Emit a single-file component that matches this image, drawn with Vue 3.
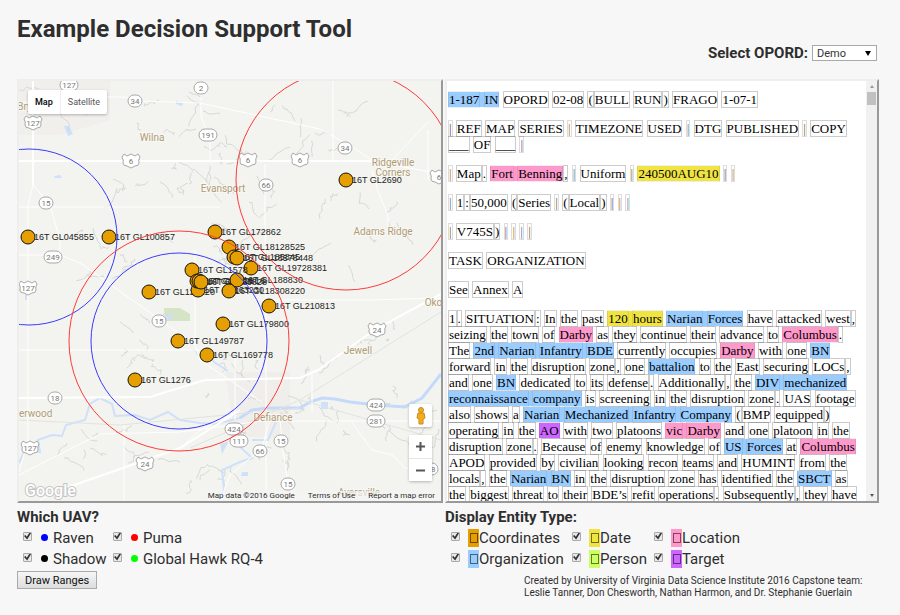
<script setup>
import { ref } from 'vue'

const opord = ref('Demo')

const uavs = ref([
  { name: 'Raven', color: '#0000ff', on: true },
  { name: 'Puma', color: '#ff0000', on: true },
  { name: 'Shadow', color: '#000000', on: true },
  { name: 'Global Hawk RQ-4', color: '#00ff00', on: true },
])

const entities = ref([
  { name: 'Coordinates', color: '#e69f00', on: true },
  { name: 'Date', color: '#f0e442', on: true },
  { name: 'Location', color: '#ff99cc', on: true },
  { name: 'Organization', color: '#99ccff', on: true },
  { name: 'Person', color: '#ccff66', on: true },
  { name: 'Target', color: '#cc66ff', on: true },
])

/* Entities are written as {X:words}, where X is the first letter of the type. */
const source = [
  '{O:1-187 IN} OPORD 02-08 (BULL RUN) FRAGO 1-07-1',
  '| REF MAP SERIES | TIMEZONE USED | DTG PUBLISHED | COPY ___ OF ___ |',
  '| Map. {L:Fort Benning}, | Uniform | {D:240500AUG10} | |',
  '| 1:50,000 (Series | (Local) | | |',
  '| V745S) | | | |',
  'TASK ORGANIZATION',
  'See Annex A',
  '1. SITUATION: In the past {D:120 hours} {O:Narian Forces} have attacked west, seizing the town of {L:Darby} as they continue their advance to {L:Columbus}. The {O:2nd Narian Infantry BDE} currently occupies {L:Darby} with one {O:BN} forward in the disruption zone, one {O:battalion} to the East securing LOCs, and one {O:BN} dedicated to its defense. Additionally, the {O:DIV mechanized reconnaissance company} is screening in the disruption zone. UAS footage also shows a {O:Narian Mechanized Infantry Company} (BMP equipped) operating in the {T:AO} with two platoons {L:vic Darby} and one platoon in the disruption zone. Because of enemy knowledge of {O:US Forces} at {L:Columbus} APOD provided by civilian looking recon teams and HUMINT from the locals, the {O:Narian BN} in the disruption zone has identified the {O:SBCT} as the biggest threat to their BDE’s refit operations. Subsequently, they have shown the intent to defend in depth along the river and to delay forces',
]

const tints = ['tint-a', 'tint-b', 'tint-c', 'tint-d']
let pipes = 0
function tokens(text) {
  return text.match(/\s+|[|().:]|,(?!\d)|[^\s|().:,]+(?:,\d+)*/g).map((t) => ({
    text: t,
    cls: /^\s/.test(t) ? 'space' : t === '|' ? ['token', 'pipe', tints[pipes++ % 4]] : 'token',
  }))
}
const paragraphs = source.map((p) =>
  p.split(/(\{[A-Z]:[^}]*\})/).filter(Boolean).map((part) => {
    const m = part.match(/^\{([A-Z]):(.*)\}$/)
    return m ? { cls: ['entity', 'ent-' + m[1].toLowerCase()], tokens: tokens(m[2]) } : { cls: 'plain', tokens: tokens(part) }
  }),
)

const markers = [
  [28, 237, '045855'], [109, 237, '100857'], [215, 232, '172862'], [229, 247, '18128525'],
  [234, 257, '185845'], [237, 258, '18578448'], [251, 268, '19728381'], [192, 270, '1578'],
  [149, 292, '125120'], [198, 290, '163230'], [197, 281, '1628'], [199, 281, '162818'], [201, 282, '163828'],
  [237, 280, '188830'], [229, 291, '18308220'], [269, 306, '210813'], [223, 324, '179800'],
  [178, 341, '149787'], [207, 355, '169778'], [135, 380, '1276'], [346, 180, '2690'],
]
const rings = [
  [29, 237, 88, '#3a3aff'], [179, 341, 88, '#3a3aff'], [179, 341, 110, '#ff3a3a'], [346, 180, 110, '#ff3a3a'],
]
const stateRoutes = [
  [69, 85, '127'], [201, 88, '2'], [135, 101, '34'], [208, 135, '191'], [345, 148, '34'], [266, 185, '66'],
  [46, 203, '15'], [53, 257, '249'], [159, 321, '15'], [55, 398, '18'], [234, 429, '424'], [239, 441, '111'],
  [260, 451, '66'], [281, 441, '15'], [288, 484, '15'], [376, 405, '424'], [376, 421, '281'], [431, 469, '18'],
]
const usRoutes = [
  [33, 123, '127'], [131, 161, '6'], [248, 160, '6'], [300, 160, '6'], [439, 177, '6'], [28, 288, '127'],
  [377, 330, '24'], [30, 448, '127'], [145, 464, '24'],
]
const towns = [
  [152, 141, 'Wilna'], [223, 192, 'Evansport'], [393, 166, 'Ridgeville'], [393, 176, 'Corners'],
  [383, 235, 'Adams Ridge'], [358, 354, 'Jewell'], [443, 306, 'Okolona'], [273, 421, 'Defiance'],
  [359, 496, 'Ayersville'], [30, 110, 'Bryan'], [30, 417, 'Sherwood'],
]
const roads = [
  'M19 161H372L441 174', 'M33 81V185L28 205V440L19 472', 'M33 185L50 205L60 240L60 255L80 263L152 314L195 345L200 360L262 402',
  'M19 103L60 97L125 97L140 101L200 103L320 129L352 147L372 160', 'M201 81V116L210 140V161', 'M333 81V160',
  'M265 161V215L266 300V500', 'M19 207H220', 'M19 255H60', 'M195 250V345', 'M19 350H200',
  'M19 398L150 397L205 380L300 378L318 370L376 329L441 294', 'M312 372V411', 'M441 421H262L180 432L100 434L19 475',
  'M240 410L200 430L180 448L60 490L40 500', 'M280 420L283 450L288 484L297 501', 'M270 420L262 448L230 475L220 501',
  'M351 421L372 450L392 455L405 468H441', 'M388 235V215L378 192L372 170', 'M428 130V180', 'M429 121L392 160',
  'M124 425V500', 'M235 355V420', 'M262 300H370L441 298',
]
const rivers = [
  'M19 463L25 450L40 452L38 440L52 435L62 436L66 425L85 420L90 404L100 398L112 404L115 416L135 415L150 420L168 412L180 420L200 423L215 424L232 420L240 418',
  'M19 290L26 288V300', 'M240 426L237 444L252 458L240 462L222 470L224 490L218 501', 'M276 422L268 440L252 440',
  'M205 349L214 362L228 371',
]

/* Small branching creeks, laid out from a fixed seed. */
let seed = 7
const rnd = () => (seed = (seed * 16807) % 2147483647) / 2147483647
const areas = [
  [140, 90, 70, 45], [165, 130, 55, 55], [215, 145, 60, 80], [260, 100, 90, 60], [30, 85, 70, 45], [60, 230, 110, 60],
  [80, 320, 80, 60], [200, 225, 60, 60], [200, 345, 60, 55], [270, 390, 90, 50], [380, 395, 60, 40], [40, 410, 110, 50],
  [180, 455, 60, 40], [230, 425, 80, 50], [310, 190, 90, 90], [300, 320, 110, 60], [100, 145, 90, 50],
]
const creeks = areas.flatMap(([x, y, w, h]) =>
  Array.from({ length: 9 }, () => {
    let d = `M${Math.round(x + rnd() * w)} ${Math.round(y + rnd() * h)}`
    const dx = rnd() * 6 - 3
    const dy = rnd() * 6 - 3
    for (let i = 0; i < 6; i++) d += `l${(dx + rnd() * 6 - 3).toFixed(1)} ${(dy + rnd() * 6 - 3).toFixed(1)}`
    return d
  }),
)
</script>

<template>
  <div class="page">
    <h1>Example Decision Support Tool</h1>
    <div class="chooser">
      <label for="opord">Select OPORD:</label>
      <span class="select-box">
        <select id="opord" v-model="opord"><option>Demo</option></select>
        <span class="arrow" aria-hidden="true"></span>
      </span>
    </div>

    <main class="columns">
      <section class="panel map">
        <svg class="canvas" viewBox="19 81 422 420" preserveAspectRatio="xMidYMid slice" role="img" aria-label="Map">
          <rect x="0" y="0" width="500" height="600" fill="#f3f4ef" />
          <path d="M19 81H110V120L60 135H19Z" fill="#f1efec" />
          <path d="M225 372H290V440L235 435Z" fill="#f0eeea" />
          <path d="M164 308H180L190 314V321H165Z" fill="#d5e3c6" />
          <path d="M164 318L170 313L174 316L167 321Z M64 126H69L73 134L68 136Z M55 176L60 175L62 178H54Z M220 444L229 441L222 454Z M321 402H328V409H321Z M242 472H248V476H241Z M176 101L183 103L182 106L176 104Z" fill="#cfe0fa" />
          <path v-for="d in creeks" :key="d" :d="d" class="creek" />
          <path v-for="d in rivers" :key="d" :d="d" class="river" />
          <path d="M240 418L252 410L268 408L300 408L310 402L322 398L335 399L350 402L376 405L405 407L422 398L430 388L441 374" class="river wide" />
          <path d="M19 420L120 425L300 408M190 448L300 400L441 312M300 400L441 440" class="rail" />
          <path v-for="d in roads" :key="d" :d="d" class="road" />
          <path d="M19 398L150 397L205 380L300 378L318 370L376 329L441 294M240 410L180 448L60 490M33 81V185M19 161H372" class="road main" />
          <g v-for="[x, y, n] in stateRoutes" :key="'s' + x + y" class="route">
            <rect :x="x - (n.length > 2 ? 9 : 7)" :y="y - 6" :width="n.length > 2 ? 18 : 14" height="12" rx="6" />
            <text :x="x" :y="y + 3">{{ n }}</text>
          </g>
          <g v-for="[x, y, n] in usRoutes" :key="'u' + x + y" class="route">
            <path :transform="`translate(${x} ${y})`" d="M-7 -7L-4 -5L0 -7L4 -5L7 -7L9 -4Q7 -1 8 2Q8 5 4 5L0 7L-4 5Q-8 5 -8 2Q-7 -1 -9 -4Z" />
            <text :x="x" :y="y + 3">{{ n }}</text>
          </g>
          <text v-for="[x, y, n] in towns" :key="n" :x="x" :y="y" class="town">{{ n }}</text>
          <g v-for="[x, y, n] in markers" :key="n">
            <circle :cx="x" :cy="y" r="7" class="dot-marker" />
            <text :x="x + 6" :y="y + 3" class="coord">16T GL{{ n }}</text>
          </g>
          <circle v-for="[x, y, r, c] in rings" :key="c + x" :cx="x" :cy="y" :r="r" :stroke="c" class="ring" />
          <text x="25" y="496" class="brand">Google</text>
        </svg>
        <div class="map-type">
          <button type="button" class="active">Map</button>
          <button type="button">Satellite</button>
        </div>
        <div class="map-controls">
          <button type="button" class="pegman" aria-label="Street View">
            <svg width="10" height="18" viewBox="0 0 10 18">
              <path d="M2 6H8L9 11L7 12V17H3V12L1 11Z" fill="#f4ac21" stroke="#c98a13" />
              <circle cx="5" cy="3" r="2.5" fill="#f4ac21" stroke="#c98a13" />
            </svg>
          </button>
          <div class="zoom">
            <button type="button" aria-label="Zoom in"><svg width="9" height="9"><path d="M4.5 0V9M0 4.5H9" stroke="#555" stroke-width="2" /></svg></button>
            <button type="button" aria-label="Zoom out"><svg width="9" height="9"><path d="M0 4.5H9" stroke="#555" stroke-width="2" /></svg></button>
          </div>
        </div>
        <div class="legal">
          <span>Map data ©2016 Google</span><a href="#terms">Terms of Use</a><a href="#report">Report a map error</a>
        </div>
      </section>

      <section class="panel reader">
        <article class="order">
          <p v-for="(p, i) in paragraphs" :key="i"><span v-for="(part, j) in p" :key="j" :class="part.cls"><span v-for="(t, k) in part.tokens" :key="k" :class="t.cls">{{ t.text }}</span></span></p>
        </article>
        <div class="scrollbar" aria-hidden="true">
          <span class="tip up"></span><span class="thumb"></span><span class="tip down"></span>
        </div>
      </section>

      <form class="options" @submit.prevent>
        <h2>Which UAV?</h2>
        <div class="uav-grid">
          <label v-for="u in uavs" :key="u.name">
            <input v-model="u.on" type="checkbox" />
            <span class="bullet" :style="{ background: u.color }"></span>{{ u.name }}
          </label>
        </div>
        <button type="submit" class="draw">Draw Ranges</button>
      </form>

      <form class="options" @submit.prevent>
        <h2>Display Entity Type:</h2>
        <div class="entity-grid">
          <label v-for="e in entities" :key="e.name">
            <input v-model="e.on" type="checkbox" />
            <span class="swatch" :style="{ background: e.color }"><i></i></span>{{ e.name }}
          </label>
        </div>
        <p class="credits">Created by University of Virginia Data Science Institute 2016 Capstone team:<br />Leslie Tanner, Don Chesworth, Nathan Harmon, and Dr. Stephanie Guerlain</p>
      </form>
    </main>
  </div>
</template>

<style>
body {
  background: #f7f7f7;
}
</style>

<style scoped>
.page {
  box-sizing: border-box;
  padding: 14px 21px 12px 17px;
  font-family: Roboto, sans-serif;
  color: #2e2e2e;
}
h1 {
  margin: 0;
  font-size: 24px;
  line-height: 30px;
}
.chooser {
  display: flex;
  justify-content: flex-end;
  align-items: center;
  gap: 4px;
  height: 18px;
  margin: 0 2px 17px 0;
  font-size: 15px;
  font-weight: bold;
}
.select-box {
  display: grid;
  align-items: center;
}
.select-box > * {
  grid-area: 1 / 1;
}
select {
  appearance: none;
  width: 65px;
  height: 16px;
  padding: 0 4px;
  border: 1px solid #a9a9a9;
  border-radius: 0;
  background: #fff;
  font: 11px Roboto, sans-serif;
  color: #333;
}
.arrow {
  justify-self: end;
  margin-right: 6px;
  border: 3px solid transparent;
  border-top: 5px solid #000;
  border-bottom: 0;
  pointer-events: none;
}
.columns {
  display: grid;
  grid-template-columns: 426fr 434fr;
  column-gap: 2px;
}
.panel {
  box-sizing: border-box;
  height: 424px;
  border: 2px solid;
  border-color: #eee #999 #999 #eee;
  overflow: hidden;
}
.map {
  position: relative;
}
.canvas {
  display: block;
  width: 100%;
  height: 100%;
}
.creek {
  fill: none;
  stroke: #d6d9d5;
  stroke-width: 1;
}
.river {
  fill: none;
  stroke: #cfe0f8;
  stroke-width: 2;
}
.wide {
  stroke: #c4dafa;
  stroke-width: 3;
}
.rail {
  fill: none;
  stroke: #e2e2de;
}
.road {
  fill: none;
  stroke: #fff;
  stroke-width: 1;
}
.main {
  stroke-width: 2;
}
.route rect,
.route path {
  fill: #fff;
  stroke: #a8a8a8;
}
.route text {
  font-size: 8px;
  text-anchor: middle;
  fill: #777;
}
.town {
  font-size: 10px;
  text-anchor: middle;
  fill: #b09c74;
  stroke: #f8f8f4;
  stroke-width: 2;
  paint-order: stroke;
}
.dot-marker {
  fill: #e69f00;
  stroke: #111;
}
.coord {
  font: 9px 'Liberation Sans', sans-serif;
  fill: #222;
}
.ring {
  fill: none;
  stroke-width: 1;
}
.brand {
  font-size: 16px;
  font-weight: 500;
  fill: #fff;
  stroke: #c4c4c4;
  stroke-width: 2;
  paint-order: stroke;
}
.map-type {
  position: absolute;
  top: 9px;
  left: 9px;
  display: flex;
  background: #fff;
  border-radius: 2px;
  box-shadow: 0 1px 3px #0004;
}
.map-type button {
  height: 24px;
  padding: 0 7px;
  border: 0;
  background: none;
  font: 9px Roboto, sans-serif;
  color: #565656;
}
.map-type .active {
  border-right: 1px solid #eee;
  font-weight: 500;
  color: #000;
}
.map-controls {
  position: absolute;
  right: 9px;
  bottom: 20px;
  display: grid;
  gap: 8px;
}
.map-controls button {
  display: grid;
  place-items: center;
  width: 23px;
  height: 23px;
  padding: 0;
  border: 0;
  background: #fff;
}
.pegman,
.zoom {
  border-radius: 2px;
  box-shadow: 0 1px 3px #0004;
}
.zoom {
  display: grid;
  background: #fff;
}
.zoom button + button {
  border-top: 1px solid #e6e6e6;
}
.legal {
  position: absolute;
  right: 0;
  bottom: 0;
  display: flex;
  gap: 13px;
  padding: 0 6px 0 4px;
  background: #f5f5f5b0;
  font-size: 8px;
  line-height: 10px;
}
.legal a {
  color: inherit;
  text-decoration: none;
}
.reader {
  display: flex;
  background: #fff;
}
.order {
  flex: 1;
  min-width: 0;
  padding: 11px 0 0 1px;
  overflow: auto;
  scrollbar-width: none;
  font: 13px/16px 'Liberation Serif', serif;
  color: #000;
}
.order p {
  margin: 0 0 13px;
}
.token {
  border: 1px solid #0003;
}
.entity .token {
  border-color: #0001;
}
.pipe {
  border-color: #0002;
}
.tint-a {
  color: #5c3c80;
}
.tint-b {
  color: #b06820;
}
.tint-c {
  color: #4470a0;
}
.tint-d {
  color: #706010;
}
.ent-o {
  background: #99ccff;
}
.ent-l {
  background: #ff99cc;
}
.ent-d {
  background: #f0e442;
}
.ent-t {
  background: #cc66ff;
}
.scrollbar {
  display: flex;
  flex-direction: column;
  align-items: center;
  width: 11px;
  background: #f1f1f1;
}
.tip {
  margin: 4px 0;
  border: 2px solid transparent;
}
.up {
  border-top: 0;
  border-bottom: 3px solid #999;
}
.down {
  margin-top: auto;
  border-bottom: 0;
  border-top: 3px solid #555;
}
.thumb {
  width: 9px;
  height: 13px;
  background: #c1c1c1;
}
.options h2 {
  margin: 4px 0 0;
  font-size: 15px;
  line-height: 20px;
}
.uav-grid {
  display: grid;
  grid-template-columns: 90px 1fr;
}
.entity-grid {
  display: grid;
  grid-template-columns: 121px 82px 1fr;
}
.options label {
  display: flex;
  align-items: center;
  height: 21px;
  padding-left: 6px;
  font-size: 15px;
  white-space: nowrap;
}
.options input {
  appearance: none;
  display: grid;
  place-items: center;
  width: 9px;
  height: 9px;
  margin: 0 8px 3px 0;
  border: 1px solid #aaa;
  border-radius: 1px;
  background: #e8e8e8;
}
.options input:checked::before {
  content: '';
  width: 7px;
  height: 7px;
  background: #333;
  clip-path: polygon(0 50%, 20% 35%, 40% 60%, 80% 0, 100% 12%, 45% 100%);
}
.bullet {
  width: 7px;
  height: 7px;
  margin: 0 5px 0 1px;
  border-radius: 50%;
}
.swatch {
  display: grid;
  place-items: center;
  width: 11px;
  height: 18px;
}
.swatch i {
  width: 6px;
  height: 8px;
  border: 1px solid #0008;
}
.draw {
  display: block;
  height: 18px;
  margin-top: 2px;
  padding: 0 7px;
  border: 1px solid #aaa;
  border-radius: 0;
  background: linear-gradient(#f6f6f6, #ddd);
  font: 11px Roboto, sans-serif;
  color: #111;
}
.credits {
  margin: 6px 0 0 79px;
  font-size: 10px;
  line-height: 12px;
}
</style>
